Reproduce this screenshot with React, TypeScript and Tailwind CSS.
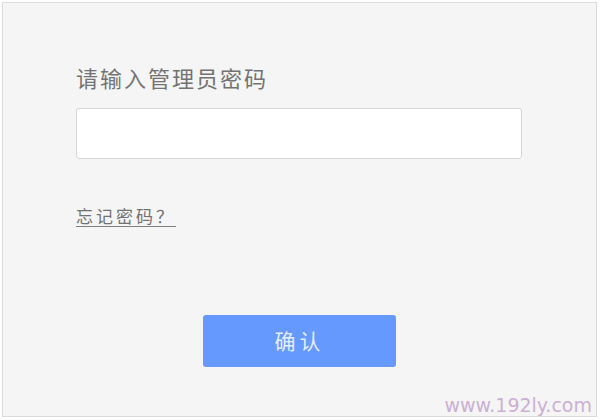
export default function App() {
  return (
    <div className="w-[600px] h-[420px] bg-white p-[2px] pr-[3px] pb-[3px]">
      <div
        className="relative h-full w-full border border-[#dcdcdc] bg-[#f5f5f5] pl-[73px] pt-[57px]"
        style={{ fontFamily: '"Noto Sans CJK SC", "Liberation Sans", sans-serif' }}
      >
        <p className="text-[22px] leading-[34px] tracking-[2px] text-[#737373]">请输入管理员密码</p>

        <input
          type="password"
          className="mt-[14px] block h-[51px] w-[446px] rounded-[3px] border border-[#d6d6d6] bg-white outline-none"
        />

        <a
          href="#"
          className="mt-[45px] inline-block text-[17px] leading-[24px] tracking-[3px] text-[#727272] underline decoration-[#808080] underline-offset-[3px]"
        >
          忘记密码？
        </a>

        <div className="mt-[87px] pl-[127px]">
          <button className="h-[52px] w-[193px] rounded-[3px] bg-[#6699fd] text-[21px] tracking-[4px] text-[#e4edff]">
            确认
          </button>
        </div>

        <span
          className="absolute right-[4px] bottom-[0px] text-[19px] leading-[22px] text-[#cbb0d3]"
          style={{ fontFamily: '"DejaVu Sans", sans-serif' }}
        >
          www.192ly.com
        </span>
      </div>
    </div>
  );
}
